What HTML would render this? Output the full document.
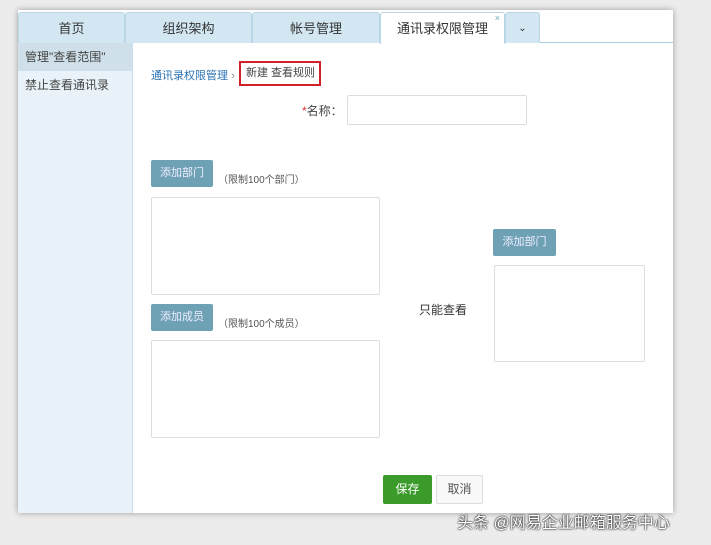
<!DOCTYPE html>
<html><head><meta charset="utf-8"><style>
*{margin:0;padding:0;box-sizing:border-box}
body{width:711px;height:545px;background:#ececec;font-family:"Liberation Sans","Noto Sans CJK SC",sans-serif;position:relative;overflow:hidden;color:#444}
.panel{position:absolute;left:18px;top:10px;width:655px;height:503px;background:#fff;box-shadow:0 0 6px rgba(0,0,0,.35)}
.tabs{position:absolute;left:0;top:0;width:655px;height:33px;background:#fff;border-bottom:1px solid #a9cde0}
.tab{position:absolute;top:2px;height:31px;background:#d3e7f2;border:1px solid #b9d6e6;border-bottom:none;border-radius:3px 3px 0 0;font-size:13px;text-align:center;line-height:31px;color:#333}
.tab.act{background:#fff;height:32px}
.side{position:absolute;left:0;top:33px;width:115px;height:470px;background:#e8f2f8;border-right:1px solid #c8dfec}
.side div{height:28px;line-height:28px;padding-left:7px;font-size:12px;color:#444}
.side .a{background:#cfe0ea}
.abs{position:absolute}
.btn{position:absolute;background:#6fa1b5;color:#eef;font-size:11px;text-align:center;border-radius:2px}
.box{position:absolute;border:1px solid #ddd;border-radius:2px;background:#fff}
</style></head><body>
<div class="panel">
<div class="tabs">
<div class="tab" style="left:0;width:107px">首页</div>
<div class="tab" style="left:107px;width:127px">组织架构</div>
<div class="tab" style="left:234px;width:128px">帐号管理</div>
<div class="tab act" style="left:362px;width:125px">通讯录权限管理<span style="position:absolute;right:4px;top:-10px;font-size:9px;color:#6aa">×</span></div>
<div class="tab" style="left:487px;width:35px;font-size:10px">⌄</div>
</div>
<div class="side"><div class="a">管理"查看范围"</div><div>禁止查看通讯录</div></div>
</div>
<div class="abs" style="left:151px;top:67px;font-size:11px;color:#2a72b5">通讯录权限管理 <span style="color:#888">›</span></div>
<div class="abs" style="left:239px;top:61px;width:82px;height:25px;border:2px solid #d0202a;font-size:11px;line-height:21px;padding-left:5px;color:#444">新建 查看规则</div>
<div class="abs" style="left:302px;top:102px;font-size:12px;color:#444"><span style="color:#d33">*</span>名称：</div>
<div class="box" style="left:347px;top:95px;width:180px;height:30px"></div>
<div class="btn" style="left:151px;top:160px;width:62px;height:27px;line-height:27px">添加部门</div>
<div class="abs" style="left:218px;top:171px;font-size:10px;color:#555">（限制100个部门）</div>
<div class="box" style="left:151px;top:197px;width:229px;height:98px"></div>
<div class="btn" style="left:151px;top:304px;width:62px;height:27px;line-height:27px">添加成员</div>
<div class="abs" style="left:218px;top:315px;font-size:10px;color:#555">（限制100个成员）</div>
<div class="box" style="left:151px;top:340px;width:229px;height:98px"></div>
<div class="abs" style="left:419px;top:301px;font-size:12px;color:#333">只能查看</div>
<div class="btn" style="left:493px;top:229px;width:63px;height:27px;line-height:27px">添加部门</div>
<div class="box" style="left:494px;top:265px;width:151px;height:97px"></div>
<div class="abs" style="left:383px;top:475px;width:49px;height:29px;background:#3a9b2a;color:#fff;font-size:12px;line-height:29px;text-align:center;border-radius:2px">保存</div>
<div class="abs" style="left:436px;top:475px;width:47px;height:29px;border:1px solid #ddd;background:#f8f8f8;color:#555;font-size:12px;line-height:27px;text-align:center;border-radius:2px">取消</div>
<div class="abs" style="left:457px;top:509px;font-size:16px;color:#fff;text-shadow:0 0 2px #000,0 0 1px #000">头条 @网易企业邮箱服务中心</div>
</body></html>
